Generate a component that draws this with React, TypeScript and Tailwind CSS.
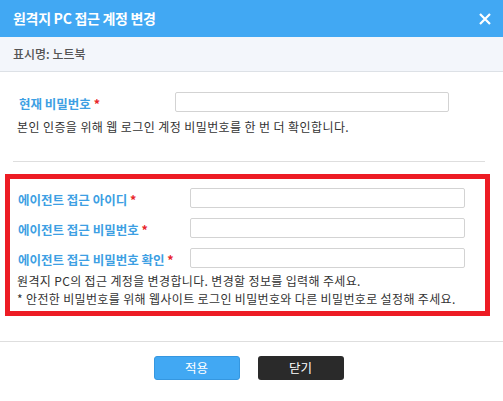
const FIELDS = ["에이전트 접근 아이디", "에이전트 접근 비밀번호", "에이전트 접근 비밀번호 확인"];

function Label({ text }: { text: string }) {
  return (
    <span className="text-[12.5px] font-bold text-[#3d9fe3]">
      {text} <span className="text-[#e8262b]">*</span>
    </span>
  );
}

export default function App() {
  return (
    <div className="w-[503px] h-[401px] bg-white flex flex-col overflow-hidden font-['Noto_Sans_CJK_KR',sans-serif]">
      {/* Title bar */}
      <div className="h-[37px] bg-[#41a8f3] flex items-center justify-between pl-[13px] pr-[12px] shrink-0">
        <span className="text-white text-[14px] font-bold tracking-[-0.3px]">원격지 PC 접근 계정 변경</span>
        <svg width="12" height="12" viewBox="0 0 12 12" className="text-white">
          <path d="M1 1 L11 11 M11 1 L1 11" stroke="currentColor" strokeWidth="2.2" />
        </svg>
      </div>

      {/* Sub header */}
      <div className="h-[35px] bg-[#f3f6fb] border-b border-[#dde1e6] flex items-center pl-[13px] shrink-0">
        <span className="text-[12px] font-medium text-[#555]">표시명: 노트북</span>
      </div>

      {/* Current password */}
      <div className="px-[13px] pt-[20px]">
        <div className="flex items-center h-[20px]">
          <div className="w-[162px] pl-[6px]">
            <Label text="현재 비밀번호" />
          </div>
          <div className="w-[274px] h-[20px] border border-[#d3d3d3] rounded-[2px]" />
        </div>
        <p className="mt-[6px] pl-[4px] text-[12px] text-[#333] leading-[18px] tracking-[0.4px]">
          본인 인증을 위해 웹 로그인 계정 비밀번호를 한 번 더 확인합니다.
        </p>
        <div className="mt-[25px] h-px bg-[#dedede] w-[472px]" />
      </div>

      {/* Agent account box */}
      <div className="mt-[12px] ml-[5px] w-[485px] h-[142px] shrink-0 border-[5px] border-[#ed1c24] pl-[7px] pt-[9px]">
        <div className="flex flex-col gap-[10px]">
          {FIELDS.map((f) => (
            <div key={f} className="flex items-center h-[20px]">
              <div className="w-[173px] pl-[1px]">
                <Label text={f} />
              </div>
              <div className="w-[275px] h-[20px] border border-[#d3d3d3] rounded-[2px]" />
            </div>
          ))}
        </div>
        <div className="mt-[4px] text-[12px] text-[#333] leading-[18px] tracking-[0.35px]">
          <p>원격지 PC의 접근 계정을 변경합니다. 변경할 정보를 입력해 주세요.</p>
          <p>* 안전한 비밀번호를 위해 웹사이트 로그인 비밀번호와 다른 비밀번호로 설정해 주세요.</p>
        </div>
      </div>

      {/* Footer */}
      <div className="mt-[25px] border-t border-[#dedede] flex justify-center gap-[18px] pt-[14px] pr-[6px]">
        <button className="w-[86px] h-[24px] rounded-[3px] bg-[#41a8f3] border border-[#3597e0] text-white text-[12.5px]">
          적용
        </button>
        <button className="w-[86px] h-[24px] rounded-[3px] bg-[#2a2a2a] text-white text-[12.5px]">
          닫기
        </button>
      </div>
    </div>
  );
}
